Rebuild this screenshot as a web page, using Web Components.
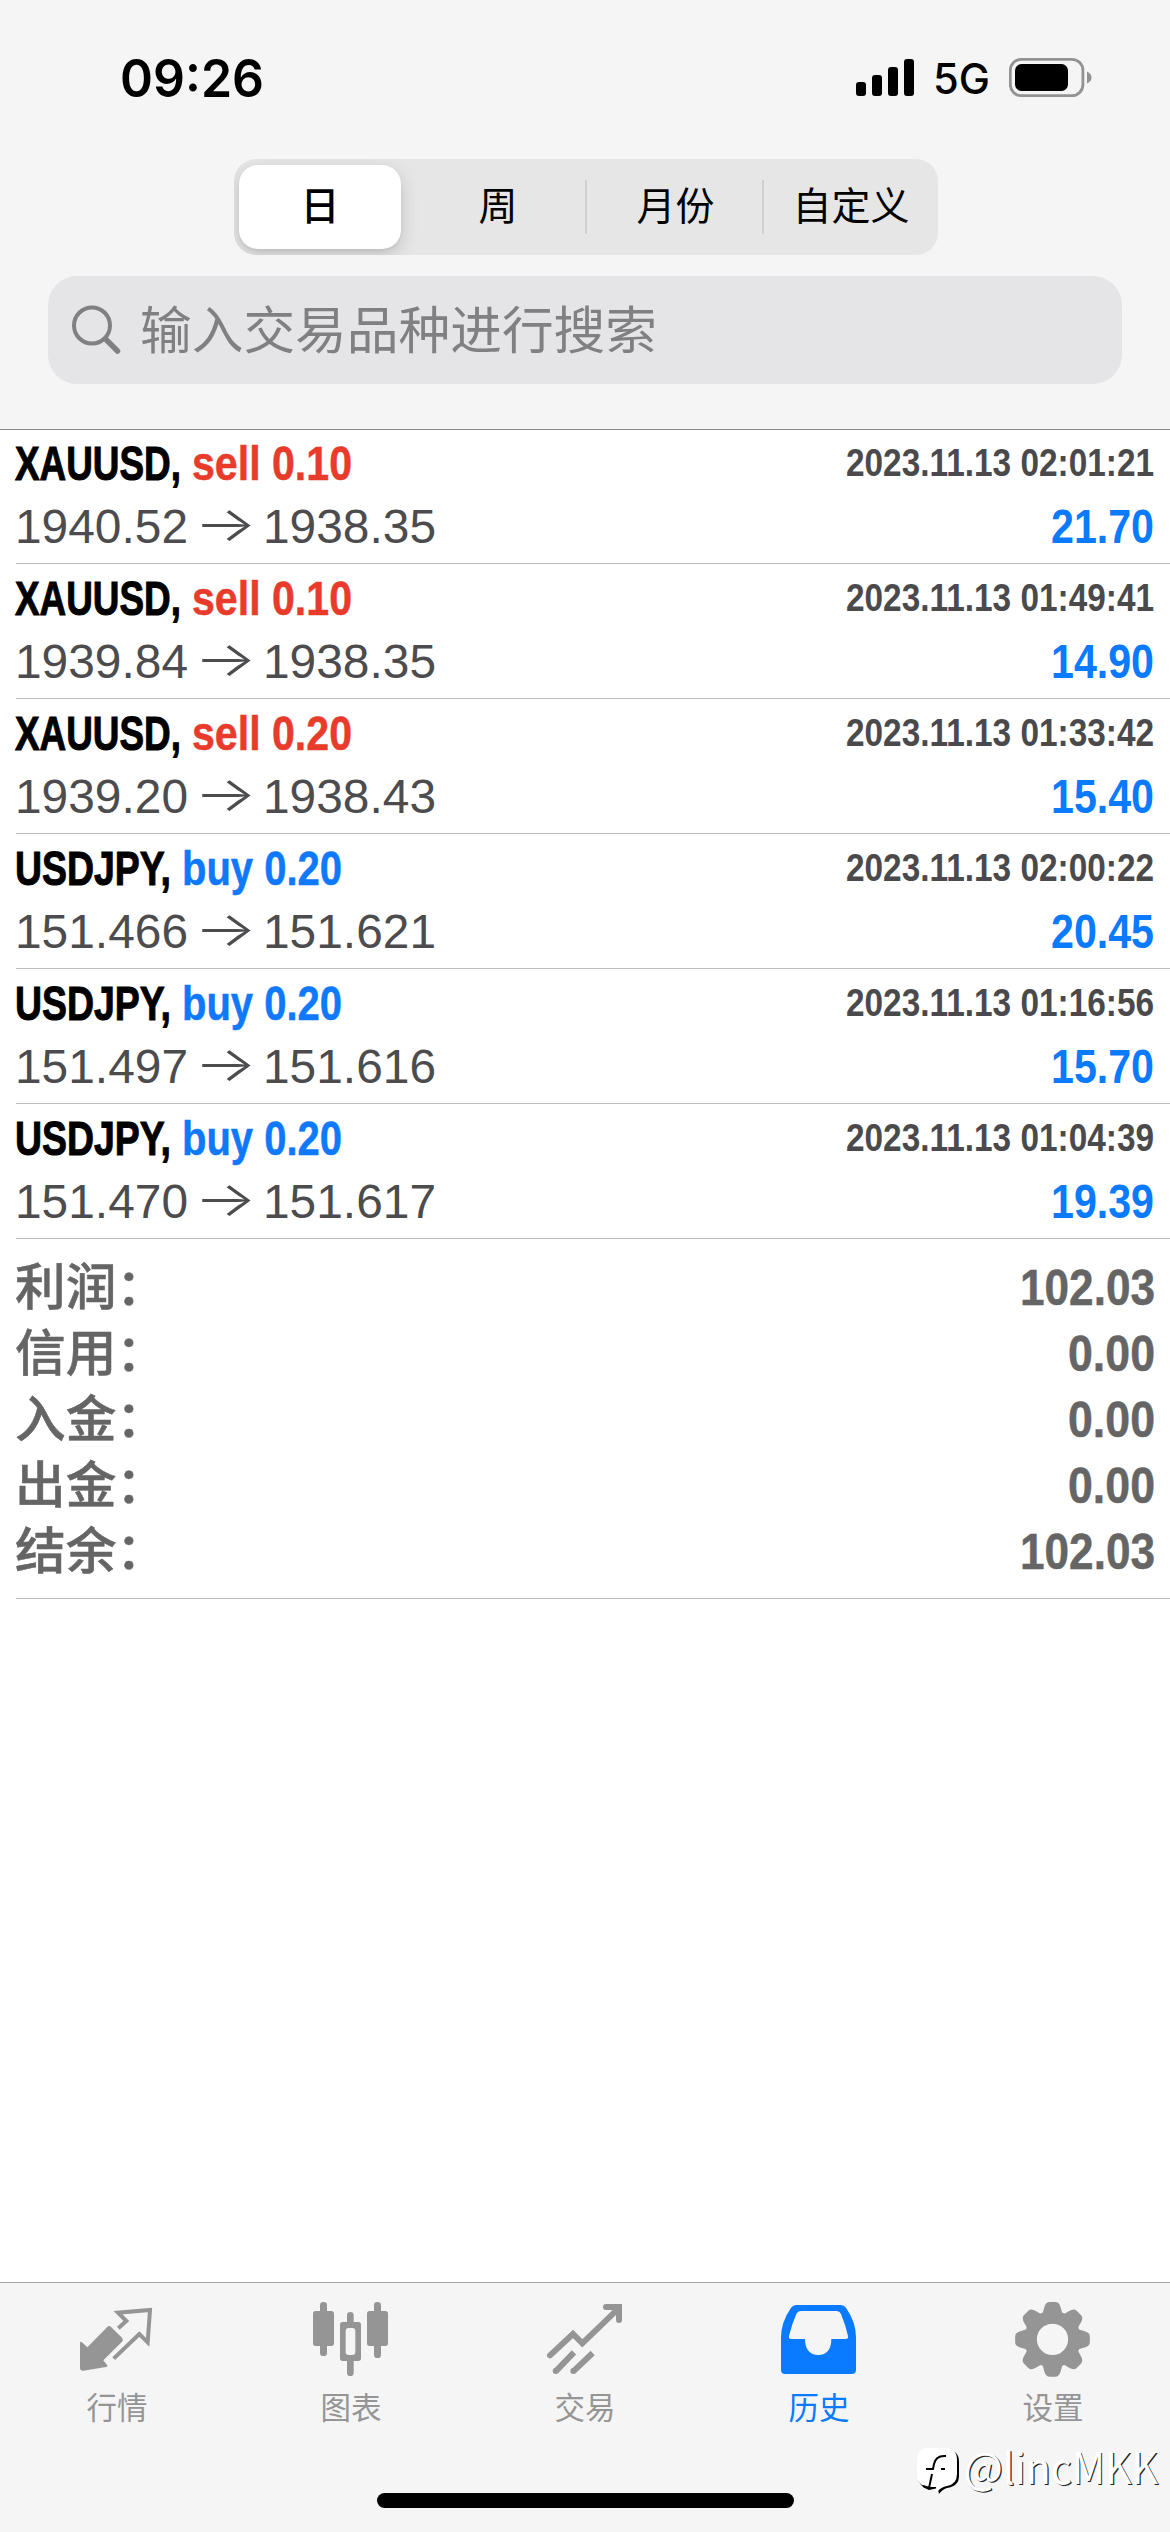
<!DOCTYPE html>
<html lang="zh-CN">
<head>
<meta charset="utf-8">
<title>历史</title>
<style>
html,body{margin:0;background:#fff}
body{width:1170px;height:2532px;overflow:hidden}
</style>
</head>
<body>
<history-app></history-app>
<script>
const CJK = '"Liberation Sans","Noto Sans CJK SC",sans-serif';
const NARROW = '"Liberation Sans Narrow","Liberation Sans",sans-serif';

class Base extends HTMLElement {
  connectedCallback() {
    if (this.shadowRoot) return;
    this.attachShadow({mode: 'open'}).innerHTML = this.render();
    this.ready && this.ready();
  }
  a(n) { return this.getAttribute(n) || ''; }
}

/* Text squeezed or stretched horizontally to an exact advance width. */
customElements.define('fit-text', class extends Base {
  render() {
    return `<style>:host{display:block;flex:none;white-space:nowrap;width:${this.a('w')}px}
      span{display:inline-block;transform-origin:0 50%}</style><span>${this.a('text')}</span>`;
  }
  ready() {
    const s = this.shadowRoot.querySelector('span');
    s.style.transform = `scaleX(${this.a('w') / s.getBoundingClientRect().width})`;
  }
});

customElements.define('status-bar', class extends Base {
  render() {
    return `<style>
      :host{display:flex;height:159px;box-sizing:border-box;padding:48px 78px 0 120px;justify-content:space-between;color:#000;font-family:Inter,sans-serif}
      .t{font-size:52px;font-weight:600;line-height:61px}
      .r{display:flex;height:60px}
      .g{font-size:42px;font-weight:500;line-height:62px;margin:0 19px 0 19px}
      svg{display:block}
    </style>
    <fit-text class="t" w="144" text="09:26"></fit-text>
    <div class="r">
      <svg width="58" height="60" viewBox="856 48 58 60"><rect x="856" y="82" width="10" height="14" rx="3"/><rect x="872" y="75" width="10" height="21" rx="3"/><rect x="888" y="67" width="10" height="29" rx="3"/><rect x="904" y="59" width="10" height="37" rx="3"/></svg>
      <fit-text class="g" w="57" text="5G"></fit-text>
      <svg width="83" height="60" viewBox="1009 48 83 60"><rect x="1010.3" y="59.3" width="72.6" height="36.4" rx="11" fill="none" stroke="#929292" stroke-width="2.8"/><rect x="1015" y="64" width="53" height="27" rx="6.5"/><path d="M1087 71.5c6 2.5 6 9.500 0 12z" fill="#929292"/></svg>
    </div>`;
  }
});

customElements.define('segmented-control', class extends Base {
  render() {
    return `<style>
      :host{display:grid;grid-template-columns:175px 178px 177px 174px;align-items:center;width:704px;height:96px;margin:0 0 0 234px;background:#e6e6e6;border-radius:22px;overflow:hidden;font:500 39px/56px ${CJK};color:#000}
      div{display:flex;justify-content:center;align-items:center;height:54px;box-sizing:border-box}
      .on{height:84px;width:162px;margin-left:5px;background:#fff;border-radius:19px;box-shadow:0 6px 18px rgba(0,0,0,.16),0 2px 3px rgba(0,0,0,.06)}
      .d{border-right:2px solid #d0d0d1;padding-left:2px}
      .n{font-weight:400}
    </style>
    <div class="on">日</div><div class="d n">周</div><div class="d n">月份</div><div class="n">自定义</div>`;
  }
});

customElements.define('search-field', class extends Base {
  render() {
    return `<style>
      :host{display:flex;align-items:center;height:108px;margin:21px 48px 0;background:#e5e5e7;border-radius:29px;color:#808083;font:400 51px/100px ${CJK}}
      svg{display:block;margin:0 19px 0 23px}
      fit-text{padding-top:4px}
    </style>
    <svg width="50" height="50" viewBox="0 0 50 50" fill="none" stroke="#808083" stroke-linecap="round"><circle cx="21" cy="20.500" r="18" stroke-width="4"/><path d="M34.500 34L46.500 46" stroke-width="5.500"/></svg>
    <fit-text w="517" text="输入交易品种进行搜索"></fit-text>`;
  }
});

customElements.define('deal-row', class extends Base {
  render() {
    const sell = this.a('side').startsWith('sell');
    return `<style>
      :host{display:block;box-sizing:border-box;height:135px;margin-left:16px;padding:5px 16px 0 0;border-bottom:1px solid #bcbcbc;font:bold 48px/60px ${NARROW}}
      div{display:flex;height:60px;margin-bottom:2px}
      .sym{color:#000;margin:0 11px 0 -1px;-webkit-text-stroke:1px #000}
      .side{color:${sell ? '#e83b2b' : '#0f79fc'};-webkit-text-stroke:.5px currentColor}
      .time{margin-left:auto;font-size:39.500px;line-height:57px;color:#4a4a4c}
      .price{font:400 48px/61px "Liberation Sans",sans-serif;color:#4c4c4e}
      .arrow{font:300 48px/56px Inter,sans-serif;color:#4c4c4e;margin:0 6px 0 6px}
      .profit{margin-left:auto;line-height:61px;color:#0a7aff}
    </style>
    <div><fit-text class="sym" w="${sell ? 166 : 156}" text="${this.a('symbol')},"></fit-text><fit-text class="side" w="160" text="${this.a('side')}"></fit-text><fit-text class="time" w="308" text="${this.a('time')}"></fit-text></div>
    <div><fit-text class="price" style="margin-left:-1px" w="173" text="${this.a('open')}"></fit-text><fit-text class="arrow" w="63" text="→"></fit-text><fit-text class="price" w="173" text="${this.a('close')}"></fit-text><fit-text class="profit" w="103" text="${this.a('profit')}"></fit-text></div>`;
  }
});

customElements.define('summary-row', class extends Base {
  render() {
    return `<style>
      :host{display:flex;justify-content:space-between;height:66px;color:#656565}
      .l{font:500 50px/69px ${CJK};margin-left:-1px;-webkit-text-stroke:.5px currentColor}
      .v{font:bold 50px/68px ${NARROW};-webkit-text-stroke:.5px currentColor}
    </style>
    <fit-text class="l" w="152" text="${this.a('label')}："></fit-text><fit-text class="v" w="${this.a('value').length > 4 ? 135 : 87}" text="${this.a('value')}"></fit-text>`;
  }
});

customElements.define('tab-item', class extends Base {
  render() {
    return `<style>
      :host{display:flex;flex-direction:column;align-items:center;flex:1;color:#959595;font:400 30.500px/48px ${CJK}}
      :host([active]){color:#0a7aff}
      ::slotted(svg){display:block;width:84px;height:84px}
    </style><slot></slot><span>${this.a('label')}</span>`;
  }
});

customElements.define('water-mark', class extends Base {
  render() {
    return `<style>
      :host{position:absolute;left:915px;top:2440px;display:flex;height:56px;color:#fff;font:400 43px/50px "Noto Sans CJK SC",sans-serif;text-shadow:1.200px .8px 0 #222}
      svg{display:block;margin-right:3px}
    </style>
    <svg width="46" height="56" viewBox="0 0 46 56"><path d="M15 10H32Q44 10 44 22V36Q44 46 32 48Q28 49 24 54Q23 50 23 48L14 50Q3 46 3 36V22Q3 10 15 10Z" fill="#000"/><path d="M14 8H30Q42 8 42 20V34Q42 44 32 46Q26 47 22 52Q21 49 21 47H14Q2 46 2 34V20Q2 8 14 8Z" fill="#fff"/><path d="M31 16Q21 15 19 24L18 29H11M17 34L14 48L8 46M26 29H30" fill="none" stroke="#000" stroke-width="2"/></svg>
    <fit-text w="194" text="@lincMKK"></fit-text>`;
  }
});

customElements.define('history-app', class extends Base {
  render() {
    const deals = [
      ['XAUUSD','sell 0.10','2023.11.13 02:01:21','1940.52','1938.35','21.70'],
      ['XAUUSD','sell 0.10','2023.11.13 01:49:41','1939.84','1938.35','14.90'],
      ['XAUUSD','sell 0.20','2023.11.13 01:33:42','1939.20','1938.43','15.40'],
      ['USDJPY','buy 0.20','2023.11.13 02:00:22','151.466','151.621','20.45'],
      ['USDJPY','buy 0.20','2023.11.13 01:16:56','151.497','151.616','15.70'],
      ['USDJPY','buy 0.20','2023.11.13 01:04:39','151.470','151.617','19.39']];
    const sums = [['利润','102.03'],['信用','0.00'],['入金','0.00'],['出金','0.00'],['结余','102.03']];
    let gear = '';
    for (let i = 0; i < 8; i++) gear += `<path transform="rotate(${i * 45} 847.5 238)" d="M815 164C823 155 821 126 838 126H857C874 126 872 155 880 164L867 190H827Z"/>`;
    return `<style>
      :host{display:flex;flex-direction:column;position:relative;width:1170px;height:2532px;background:#fff}
      header{height:430px;box-sizing:border-box;background:#f5f5f5;border-bottom:1px solid #8a8a8a}
      main{flex:1;margin-top:-1px}
      .sum{margin-left:16px;padding:15px 15px 14px 0;border-bottom:1px solid #bcbcbc}
      footer{height:250px;box-sizing:border-box;background:#f5f5f5;border-top:1px solid #a6a6a6;padding-top:17px;display:flex;flex-direction:column;align-items:center}
      nav{display:flex;width:1170px}
      .home{width:417px;height:15px;border-radius:8px;background:#000;margin-top:61px}
    </style>
    <header><status-bar></status-bar><segmented-control></segmented-control><search-field></search-field></header>
    <main>
      ${deals.map(d => `<deal-row symbol="${d[0]}" side="${d[1]}" time="${d[2]}" open="${d[3]}" close="${d[4]}" profit="${d[5]}"></deal-row>`).join('')}
      <div class="sum">${sums.map(s => `<summary-row label="${s[0]}" value="${s[1]}"></summary-row>`).join('')}</div>
    </main>
    <footer><nav>
      <tab-item label="行情"><svg viewBox="225 120 252 252"><path fill="#959595" d="M240 250Q240 243 246 247L262 262L321 202Q327 195 333 201L366 233Q371 239 366 245L310 301L321 315Q325 320 318 321L250 332Q240 333 240 323Z"/><path fill="none" stroke="#959595" stroke-width="12" d="M355 205L379 183L354 158L450 150L443 247L418 222L341 296"/></svg></tab-item>
      <tab-item label="图表"><svg viewBox="927 120 252 252" fill="#959595"><rect x="960" y="126" width="21" height="162" rx="10"/><rect x="939" y="153" width="63" height="105" rx="8"/><rect x="1122" y="126" width="21" height="168" rx="10"/><rect x="1101" y="153" width="63" height="105" rx="8"/><rect x="1041" y="156" width="20" height="40" rx="10"/><rect x="1041" y="290" width="20" height="58" rx="10"/><path fill-rule="evenodd" d="M1028 186H1075Q1083 186 1083 194V295Q1083 303 1075 303H1028Q1020 303 1020 295V194Q1020 186 1028 186ZM1046 204Q1037 204 1037 213V276Q1037 285 1046 285H1057Q1066 285 1066 276V213Q1066 204 1057 204Z"/></svg></tab-item>
      <tab-item label="交易"><svg viewBox="429 120 252 252" fill="none" stroke="#959595" stroke-width="18"><path stroke-linecap="round" d="M450 286L519 222L547 250L655 146"/><path stroke-linecap="round" d="M618 141H657V180"/><path stroke="none" fill="#959595" d="M620 132H659Q666 132 666 139V180H648V150H620Z"/><path d="M467 334L522 277M520 334L578 279"/><g fill="#959595" stroke="none"><circle cx="467" cy="333" r="9"/><circle cx="520" cy="333" r="9"/></g></svg></tab-item>
      <tab-item label="历史" active><svg viewBox="21 120 252 252"><path fill="#0a7aff" fill-rule="evenodd" d="M78 135H213Q222 135 228 143Q258 187 258 232V329Q258 342 245 342H46Q33 342 33 329V232Q33 187 63 143Q69 135 78 135ZM94 153Q83 153 79 162Q66 191 57 228Q55 237 64 237H105C105 267 119 285 145 285S184 267 184 237H227Q236 237 234 228Q226 193 213 162Q209 153 198 153Z"/></svg></tab-item>
      <tab-item label="设置"><svg viewBox="723 120 252 252" fill="#959595">${gear}<circle cx="847.500" cy="238" r="66" fill="none" stroke="#959595" stroke-width="38"/></svg></tab-item>
    </nav><div class="home"></div></footer>
    <water-mark></water-mark>`;
  }
});
</script>
</body>
</html>
